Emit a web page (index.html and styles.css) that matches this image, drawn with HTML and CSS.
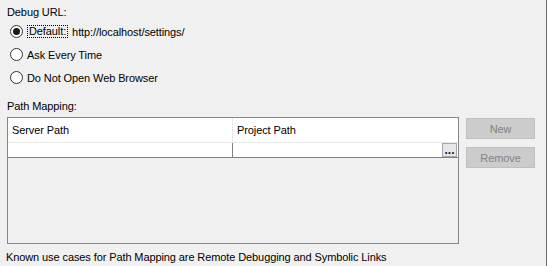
FILE: index.html
```html
<!DOCTYPE html>
<html lang="en">
<head>
  <meta charset="UTF-8">
  <title>Run Configuration</title>
  <link rel="stylesheet" href="styles.css">
</head>
<body>
  <div class="panel">
    <div class="field-label">Debug URL:</div>

    <div class="radio-group">
      <label class="radio-row">
        <span class="radio checked"></span>
        <span class="focus-box">Default:</span>
        <span class="url">http://localhost/settings/</span>
      </label>
      <label class="radio-row">
        <span class="radio"></span>
        <span>Ask Every Time</span>
      </label>
      <label class="radio-row">
        <span class="radio"></span>
        <span>Do Not Open Web Browser</span>
      </label>
    </div>

    <div class="field-label mapping-label">Path Mapping:</div>

    <div class="mapping">
      <!-- Mapping table -->
      <div class="table">
        <div class="table-head">
          <div class="cell">Server Path</div>
          <div class="cell">Project Path</div>
        </div>
        <div class="table-row">
          <div class="cell"></div>
          <div class="cell browse-cell"><span class="browse-btn">...</span></div>
        </div>
      </div>

      <div class="buttons">
        <button class="side-button" disabled>New</button>
        <button class="side-button" disabled>Remove</button>
      </div>
    </div>

    <p class="hint">Known use cases for Path Mapping are Remote Debugging and Symbolic Links</p>
  </div>
</body>
</html>
```

FILE: styles.css
```css
/* Base */
html, body { margin: 0; padding: 0; }
body {
  font-family: 'Liberation Sans', Arial, sans-serif;
  font-size: 11px;
  letter-spacing: -0.1px;
  color: #000;
  background-color: #f0f0f0;
}
.panel {
  box-sizing: border-box;
  width: 547px;
  height: 266px;
  padding-left: 7px;
  border-right: 1px solid #6b6b6b;
  display: flex;
  flex-direction: column;
}
.field-label { line-height: 16px; margin-top: 4px; }
.mapping-label { margin-top: 9px; }

/* Radios */
.radio-group { display: flex; flex-direction: column; }
.radio-row {
  display: flex;
  align-items: center;
  height: 23px;
  padding-left: 3px;
}
.radio {
  box-sizing: border-box;
  width: 13px;
  height: 13px;
  border: 1px solid #333;
  border-radius: 50%;
  background-color: #fff;
  margin-right: 4px;
  position: relative;
}
.radio.checked::after {
  content: "";
  position: absolute;
  left: 2px;
  top: 2px;
  width: 7px;
  height: 7px;
  border-radius: 50%;
  background-color: #1a1a1a;
}
.focus-box {
  border: 1px dotted #000;
  padding: 0 1px;
  line-height: 11px;
}
.url { margin-left: 4px; }

/* Mapping table */
.mapping { display: flex; margin-top: 3px; }
.table {
  box-sizing: border-box;
  width: 452px;
  height: 127px;
  border: 1px solid #828790;
  background-color: #f0f0f0;
}
.table-head, .table-row { display: flex; background-color: #fff; }
.table-head .cell {
  height: 24px;
  line-height: 24px;
  border-bottom: 1px solid #e8e8e8;
}
.table-row .cell {
  height: 14px;
  border-bottom: 1px solid #808080;
}
.cell {
  padding-left: 4px;
  width: 220px;
}
.cell + .cell { width: 221px; padding-left: 4px; }
.table-head .cell:first-child { border-right: 1px solid #e8e8e8; }
.table-row .cell:first-child { border-right: 1px solid #808080; }
.browse-cell { display: flex; justify-content: flex-end; }
.browse-btn {
  box-sizing: border-box;
  width: 15px;
  height: 14px;
  border: 1px solid #a8a8a8;
  background-color: #e6e6e6;
  color: #2b0a5c;
  font-size: 12px;
  font-weight: bold;
  line-height: 12px;
  text-align: center;
  letter-spacing: 0;
  margin-right: 1px;
}

/* Side buttons */
.buttons {
  display: flex;
  flex-direction: column;
  gap: 8px;
  margin-left: 7px;
  margin-top: 1px;
}
.side-button {
  width: 69px;
  height: 21px;
  padding: 0;
  font-family: inherit;
  font-size: 11px;
  letter-spacing: -0.1px;
  color: #838383;
  background-color: #cccccc;
  border: 1px solid #bfbfbf;
}

.hint { margin: 5px 0 0 -1px; line-height: 16px; }
```
